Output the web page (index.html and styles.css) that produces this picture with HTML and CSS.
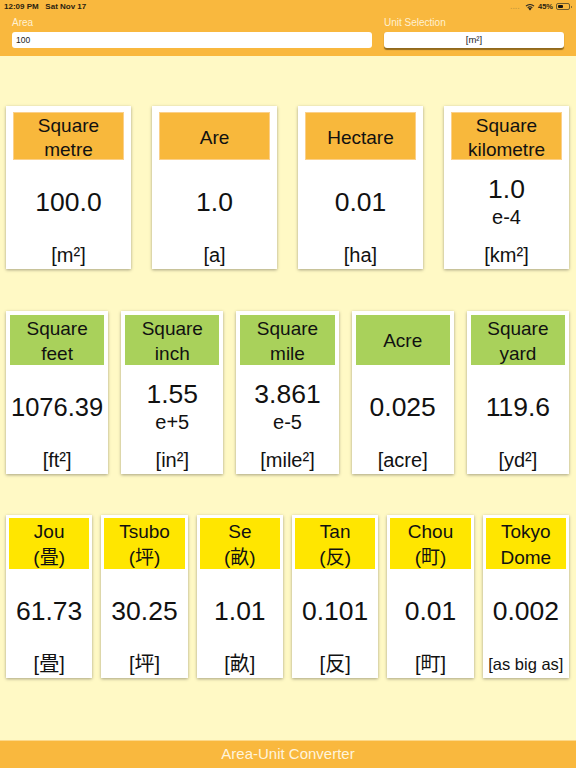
FILE: index.html
```html
<!DOCTYPE html>
<html>
<head>
<meta charset="utf-8">
<link rel="stylesheet" href="styles.css">
</head>
<body>
<div class="app">
  <header class="topbar">
    <div class="status">
      <span class="time">12:09 PM&nbsp;&nbsp;&nbsp;Sat Nov 17</span>
      <span class="sys">
        <span class="dots">....</span>
        <svg class="wifi" width="10" height="8" viewBox="0 0 10 8"><path d="M5 7.6 L3.3 5.6 A2.6 2.6 0 0 1 6.7 5.6 Z" fill="#222"/><path d="M2.3 4.5 A4 4 0 0 1 7.7 4.5 L7 5.2 A3 3 0 0 0 3 5.2 Z" fill="#222"/><path d="M0.6 2.8 A6.3 6.3 0 0 1 9.4 2.8 L8.7 3.6 A5.2 5.2 0 0 0 1.3 3.6 Z" fill="#222"/></svg>
        <span class="pct">45%</span>
        <span class="battery"><span class="level"></span></span>
      </span>
    </div>
    <div class="fields">
      <div class="field field-area">
        <div class="label">Area</div>
        <div class="input">100</div>
      </div>
      <div class="field field-unit">
        <div class="label">Unit Selection</div>
        <div class="button">[m²]</div>
      </div>
    </div>
  </header>

  <main class="content">
    <section class="row row4">
      <div class="card"><div class="head orange">Square<br>metre</div><div class="value">100.0</div><div class="unit">[m²]</div></div>
      <div class="card"><div class="head orange">Are</div><div class="value">1.0</div><div class="unit">[a]</div></div>
      <div class="card"><div class="head orange">Hectare</div><div class="value">0.01</div><div class="unit">[ha]</div></div>
      <div class="card"><div class="head orange">Square<br>kilometre</div><div class="value two"><span class="main">1.0</span><span class="exp">e-4</span></div><div class="unit">[km²]</div></div>
    </section>

    <section class="row row5">
      <div class="card"><div class="head green">Square<br>feet</div><div class="value">1076.39</div><div class="unit">[ft²]</div></div>
      <div class="card"><div class="head green">Square<br>inch</div><div class="value two"><span class="main">1.55</span><span class="exp">e+5</span></div><div class="unit">[in²]</div></div>
      <div class="card"><div class="head green">Square<br>mile</div><div class="value two"><span class="main">3.861</span><span class="exp">e-5</span></div><div class="unit">[mile²]</div></div>
      <div class="card"><div class="head green">Acre</div><div class="value">0.025</div><div class="unit">[acre]</div></div>
      <div class="card"><div class="head green">Square<br>yard</div><div class="value">119.6</div><div class="unit">[yd²]</div></div>
    </section>

    <section class="row row6">
      <div class="card"><div class="head yellow">Jou<br>(畳)</div><div class="value">61.73</div><div class="unit">[畳]</div></div>
      <div class="card"><div class="head yellow">Tsubo<br>(坪)</div><div class="value">30.25</div><div class="unit">[坪]</div></div>
      <div class="card"><div class="head yellow">Se<br>(畝)</div><div class="value">1.01</div><div class="unit">[畝]</div></div>
      <div class="card"><div class="head yellow">Tan<br>(反)</div><div class="value">0.101</div><div class="unit">[反]</div></div>
      <div class="card"><div class="head yellow">Chou<br>(町)</div><div class="value">0.01</div><div class="unit">[町]</div></div>
      <div class="card"><div class="head yellow">Tokyo<br>Dome</div><div class="value">0.002</div><div class="unit small">[as big as]</div></div>
    </section>
  </main>

  <footer class="bottombar">Area-Unit Converter</footer>
</div>
</body>
</html>
```
FILE: styles.css
```css
* { box-sizing: border-box; }
html, body { margin: 0; padding: 0; }
body {
  font-family: "Liberation Sans", Arial, "Noto Sans CJK JP", sans-serif;
  color: #111;
}
.app {
  width: 576px;
  height: 768px;
  display: flex;
  flex-direction: column;
  background: #fff9c5;
}
.topbar {
  background: #f9b83e;
  height: 56px;
  flex: none;
}
.status {
  height: 13px;
  display: flex;
  justify-content: space-between;
  align-items: center;
  padding: 0 6px 0 4px;
  font-size: 8px;
  font-weight: bold;
  color: #2a2210;
}
.sys { display: flex; align-items: center; gap: 3px; }
.dots { color: #c99a3c; letter-spacing: 0.5px; font-size: 7px; margin-right: 2px; }
.pct { font-size: 7.5px; }
.battery {
  width: 14px; height: 7px;
  border: 1px solid #6d5a2c;
  border-radius: 2px;
  padding: 1px;
  display: flex;
  position: relative;
}
.battery::after {
  content: "";
  position: absolute;
  right: -3px; top: 1.5px;
  width: 1.5px; height: 2.5px;
  background: #6d5a2c;
  border-radius: 0 1px 1px 0;
}
.level { width: 45%; background: #111; border-radius: 1px; }

.fields {
  display: flex;
  gap: 12px;
  padding: 0 12px;
}
.field-area { flex: 2; }
.field-unit { flex: 1; }
.label {
  height: 19px;
  line-height: 20px;
  font-size: 10px;
  color: #fff1d2;
}
.input {
  height: 16px;
  background: #fff;
  border-radius: 3px;
  font-size: 8.5px;
  line-height: 16px;
  padding-left: 4px;
  color: #222;
}
.button {
  height: 16px;
  background: #fff;
  border-radius: 3px;
  font-size: 9.5px;
  line-height: 16px;
  text-align: center;
  color: #222;
  box-shadow: 0 1.5px 1px rgba(60, 40, 0, 0.55);
}

.content {
  flex: 1;
  display: flex;
  flex-direction: column;
  gap: 42px;
  padding: 50px 7px 0 6px;
}
.row { display: grid; }
.row4 { grid-template-columns: repeat(4, minmax(0, 1fr)); column-gap: 21px; }
.row5 { grid-template-columns: repeat(5, minmax(0, 1fr)); column-gap: 13px; }
.row6 { grid-template-columns: repeat(6, minmax(0, 1fr)); column-gap: 9px; margin-top: -1px; }

.card {
  height: 163px;
  background: #fff;
  display: flex;
  flex-direction: column;
  box-shadow: 0 1px 3px rgba(0, 0, 0, 0.35);
  min-width: 0;
}
.row4 .card { padding: 6px 7px 2px; }
.row5 .card { padding: 4px 4px 2px; }
.row6 .card { padding: 3px 3px 2px; }

.head {
  display: flex;
  align-items: center;
  justify-content: center;
  text-align: center;
  font-size: 19px;
  line-height: 24px;
  color: #111;
  flex: none;
}
.row4 .head { height: 48px; padding-top: 3px; }
.row5 .head { height: 50px; line-height: 25px; padding-top: 1px; }
.row6 .head { height: 51px; line-height: 26px; padding-top: 3px; }
.orange { background: #f8b83c; box-shadow: inset 0 0 0 1px #fbd08a; }
.green { background: #a9d15b; }
.yellow { background: #ffe600; }

.value {
  flex: 1;
  display: flex;
  align-items: center;
  justify-content: center;
  font-size: 26.5px;
  padding-top: 1px;
  color: #111;
  white-space: nowrap;
}
.row5 .card:first-child .value { font-size: 25.5px; }
.value.two { flex-direction: column; }
.value .main { font-size: 26.5px; line-height: 30px; }
.value .exp { font-size: 20px; line-height: 27px; }

.unit {
  height: 24px;
  line-height: 24px;
  text-align: center;
  font-size: 20px;
  color: #111;
  flex: none;
  white-space: nowrap;
}
.unit.small { font-size: 16.5px; }

.bottombar {
  height: 28px;
  flex: none;
  background: #f9b83e;
  border-top: 1px solid #fcd889;
  color: #fff4dc;
  font-size: 15px;
  line-height: 26px;
  text-align: center;
}
```
